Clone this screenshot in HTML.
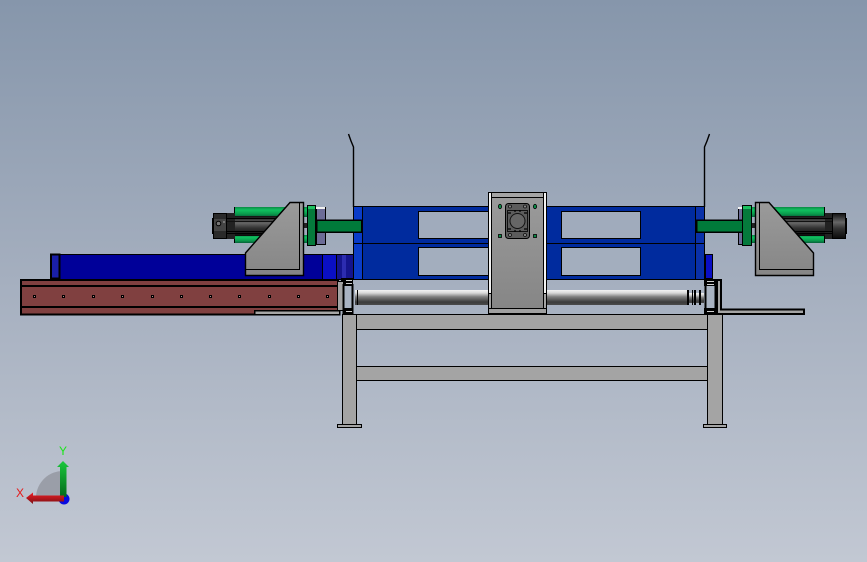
<!DOCTYPE html>
<html><head><meta charset="utf-8"><style>
html,body{margin:0;padding:0;width:867px;height:562px;overflow:hidden;background:#a5afbf}
svg{display:block}
</style></head><body>
<svg xmlns="http://www.w3.org/2000/svg" width="867" height="562" viewBox="0 0 867 562">
<defs>
<linearGradient id="bg" x1="0" y1="0" x2="0" y2="1"><stop offset="0" stop-color="#8696ab"/><stop offset=".5" stop-color="#a5afbf"/><stop offset="1" stop-color="#c2c8d3"/></linearGradient>
<linearGradient id="rod" x1="0" y1="0" x2="0" y2="1"><stop offset="0" stop-color="#f4f4f4"/><stop offset=".2" stop-color="#d8d8d8"/><stop offset=".45" stop-color="#808080"/><stop offset=".8" stop-color="#3c3c3c"/><stop offset="1" stop-color="#4a4a4a"/></linearGradient>
<linearGradient id="grn" x1="0" y1="0" x2="0" y2="1"><stop offset="0" stop-color="#0a8a45"/><stop offset=".3" stop-color="#10c060"/><stop offset=".7" stop-color="#0a9a4c"/><stop offset="1" stop-color="#06603a"/></linearGradient>
<linearGradient id="blk" x1="0" y1="0" x2="0" y2="1"><stop offset="0" stop-color="#111"/><stop offset=".35" stop-color="#666"/><stop offset=".6" stop-color="#333"/><stop offset="1" stop-color="#0a0a0a"/></linearGradient>
<linearGradient id="gus" x1="0" y1="0" x2="0" y2="1"><stop offset="0" stop-color="#9a9a9a"/><stop offset="1" stop-color="#868686"/></linearGradient>
<linearGradient id="ga" x1="0" y1="0" x2="0" y2="1"><stop offset="0" stop-color="#1cc83c"/><stop offset="1" stop-color="#036a1c"/></linearGradient>
<linearGradient id="ra" x1="0" y1="0" x2="0" y2="1"><stop offset="0" stop-color="#ee1c24"/><stop offset="1" stop-color="#7a1014"/></linearGradient>
</defs>
<rect width="867" height="562" fill="url(#bg)"/>

<!-- upper thin lines -->
<g fill="none" stroke="#000" stroke-width="1.4">
<path d="M348.500 134L351 141L353.500 147V207"/>
<path d="M709.500 134L707 141L704.500 147V207"/>
</g>

<g stroke="#000" stroke-width="1" shape-rendering="crispEdges">
<!-- dark blue bar left -->
<rect x="51" y="254.500" width="295" height="25" fill="#000099"/>
<rect x="51" y="254.500" width="8.500" height="24" fill="#1a1fa8" stroke-width="2"/>
<rect x="322.500" y="254.500" width="14" height="25" fill="#0a0fc4"/>
<rect x="336.500" y="254.500" width="17" height="25" fill="#14148c"/>
<rect x="342" y="255" width="4" height="24" fill="#2c2cb0" stroke="none"/>

<!-- main blue box -->
<rect x="353.500" y="206.500" width="351" height="73" fill="#002b9e"/>
<rect x="354" y="207" width="8" height="72" fill="#0a3cc8" stroke="none"/>
<rect x="696" y="207" width="8" height="72" fill="#0a31a8" stroke="none"/>
<path d="M362.500 207V279M695.500 207V279M354 243.500H704" fill="none"/>
<rect x="418.500" y="211.500" width="80" height="27" fill="#a0abbc"/>
<rect x="418.500" y="247.500" width="80" height="28" fill="#a3aebe"/>
<rect x="561.500" y="211.500" width="79" height="27" fill="#a0abbc"/>
<rect x="561.500" y="247.500" width="79" height="28" fill="#a3aebe"/>

<!-- small blue right -->
<rect x="705.500" y="254.500" width="7" height="24" fill="#0a0fc4"/>

<!-- red beam -->
<rect x="21" y="280" width="317" height="34.500" fill="#804040" stroke-width="2"/>
<path d="M21 286H338M21 307H338" fill="none" stroke-width="2"/>
<rect x="254.500" y="310.500" width="85" height="4" fill="#a6a6a6" stroke-width="1.500"/>
</g>

<!-- beam holes -->
<g fill="#b09090" stroke="#000" stroke-width="1" shape-rendering="crispEdges">
<rect x="33.500" y="295.500" width="2" height="2"/><rect x="62.500" y="295.500" width="2" height="2"/><rect x="92.500" y="295.500" width="2" height="2"/><rect x="121.500" y="295.500" width="2" height="2"/><rect x="151.500" y="295.500" width="2" height="2"/><rect x="180.500" y="295.500" width="2" height="2"/><rect x="209.500" y="295.500" width="2" height="2"/><rect x="238.500" y="295.500" width="2" height="2"/><rect x="268.500" y="295.500" width="2" height="2"/><rect x="297.500" y="295.500" width="2" height="2"/><rect x="326.500" y="295.500" width="2" height="2"/>
</g>

<g stroke="#000" stroke-width="1" shape-rendering="crispEdges">
<!-- table -->
<rect x="356.500" y="314.500" width="351" height="15" fill="#a4a4a4"/>
<rect x="356.500" y="366.500" width="351" height="14" fill="#a4a4a4"/>
<rect x="342.500" y="314.500" width="14" height="110" fill="#a4a4a4"/>
<rect x="707.500" y="314.500" width="15" height="110" fill="#a4a4a4"/>
<rect x="337.500" y="424.500" width="24" height="3" fill="#a4a4a4"/>
<rect x="703.500" y="424.500" width="23" height="3" fill="#a4a4a4"/>
<!-- right bracket -->
<path d="M717 280H721V309.500H804V314H717Z" fill="#a4a4a4" stroke-width="2"/>
<!-- left gray post -->
<rect x="337.500" y="281.500" width="6" height="29" fill="#a4a4a4"/>
</g>

<!-- end frames -->
<g fill="#a9b3c2" stroke="#000" stroke-width="2" shape-rendering="crispEdges">
<rect x="343.500" y="285" width="9" height="29"/>
<rect x="705.500" y="285" width="10" height="29"/>
</g>
<g fill="#000" shape-rendering="crispEdges">
<rect x="341" y="278" width="12" height="3"/><rect x="343" y="281" width="10" height="5"/>
<rect x="344" y="308" width="9" height="6"/>
<rect x="704" y="279" width="16" height="2"/><rect x="704" y="281" width="13" height="5"/>
<rect x="704" y="308" width="12" height="6"/>
</g>
<g fill="#d0d0d0" shape-rendering="crispEdges">
<rect x="346" y="280" width="6" height="1"/><rect x="346" y="283" width="6" height="1"/><rect x="346" y="311" width="6" height="1"/>
<rect x="707" y="281" width="7" height="1"/><rect x="707" y="284" width="7" height="1"/><rect x="707" y="311" width="7" height="1"/>
</g>

<!-- roller -->
<rect x="355" y="290" width="334" height="15" fill="url(#rod)" shape-rendering="crispEdges"/>
<rect x="689" y="293" width="15" height="10" fill="url(#rod)" shape-rendering="crispEdges"/>
<g fill="#000" shape-rendering="crispEdges">
<rect x="357" y="290" width="1" height="15"/>
<rect x="687" y="290" width="2" height="15"/><rect x="692" y="290" width="1" height="15"/><rect x="694" y="290" width="2" height="15"/><rect x="699" y="290" width="2" height="15"/>
</g>

<!-- center plate -->
<g stroke="#000" stroke-width="1" shape-rendering="crispEdges">
<rect x="488.500" y="192.500" width="58" height="121" fill="#a4a4a4"/>
<rect x="488.500" y="192.500" width="3" height="101" fill="#f2f2f2"/>
<rect x="543.500" y="192.500" width="3" height="101" fill="#f2f2f2"/>
<rect x="491.500" y="197.500" width="52" height="111" fill="url(#gus)"/>
<rect x="488.500" y="308.500" width="58" height="5" fill="#a0a0a0"/>
</g>
<g>
<rect x="505.500" y="203.500" width="24" height="35" rx="3" fill="#5c5c5c" stroke="#000"/>
<rect x="507.500" y="210.500" width="20" height="21" fill="none" stroke="#111"/>
<circle cx="517.500" cy="221" r="7.500" fill="#666" stroke="#111"/>
<circle cx="510" cy="206.500" r="1.500" fill="#888" stroke="#111" stroke-width=".8"/><circle cx="525" cy="206.500" r="1.500" fill="#888" stroke="#111" stroke-width=".8"/>
<circle cx="510" cy="235" r="1.500" fill="#888" stroke="#111" stroke-width=".8"/><circle cx="525" cy="235" r="1.500" fill="#888" stroke="#111" stroke-width=".8"/>
<path d="M508 213h3M524 213h3M508 229h3M524 229h3M515 210v2M520 210v2M515 230v2M520 230v2" stroke="#000" stroke-width="1.200"/>
<ellipse cx="500" cy="206.500" rx="1.600" ry="2.200" fill="#0a8a45" stroke="#000" stroke-width=".8"/>
<ellipse cx="535" cy="206.500" rx="1.600" ry="2.200" fill="#0a8a45" stroke="#000" stroke-width=".8"/>
<rect x="498.500" y="234.500" width="3" height="3" fill="#0a8a45" stroke="#000" stroke-width=".8"/>
<rect x="533.500" y="234.500" width="3" height="3" fill="#0a8a45" stroke="#000" stroke-width=".8"/>
</g>

<!-- LEFT cylinder -->
<g shape-rendering="crispEdges">
<rect x="234" y="207" width="74" height="10" fill="url(#grn)"/>
<rect x="234" y="235" width="74" height="8" fill="url(#grn)"/>
<rect x="234" y="207" width="1" height="36" fill="#000"/>
<rect x="226" y="216" width="60" height="20" fill="url(#blk)"/>
<rect x="226" y="213" width="9" height="26" fill="#222"/>
<rect x="226" y="218" width="60" height="1" fill="#000"/><rect x="226" y="221" width="60" height="1" fill="#111"/><rect x="226" y="231" width="60" height="1" fill="#000"/><rect x="226" y="233" width="60" height="1" fill="#000"/>
<rect x="213.500" y="213.500" width="13" height="25" fill="#2a2a2a" stroke="#000"/>
<rect x="212" y="218" width="2" height="16" fill="#000"/>
<rect x="214" y="219" width="12" height="12" fill="#444"/>
<rect x="223" y="221" width="2" height="2" fill="#777"/>
</g>
<circle cx="218.500" cy="223.500" r="2.300" fill="#777" stroke="#000"/>

<!-- RIGHT cylinder -->
<g shape-rendering="crispEdges">
<rect x="752" y="207" width="73" height="10" fill="url(#grn)"/>
<rect x="752" y="235" width="73" height="8" fill="url(#grn)"/>
<rect x="824" y="207" width="1" height="36" fill="#000"/>
<rect x="770" y="216" width="63" height="20" fill="url(#blk)"/>
<rect x="825" y="213" width="8" height="26" fill="#222"/>
<rect x="770" y="218" width="63" height="1" fill="#000"/><rect x="770" y="221" width="63" height="1" fill="#111"/><rect x="770" y="231" width="63" height="1" fill="#000"/><rect x="770" y="233" width="63" height="1" fill="#000"/>
<rect x="832.500" y="213.500" width="13" height="25" fill="url(#blk)" stroke="#000"/>
<rect x="845" y="218" width="2" height="16" fill="#000"/>
</g>

<!-- plates & shafts -->
<g stroke="#000" stroke-width="1" shape-rendering="crispEdges">
<rect x="316.500" y="207.500" width="9" height="37" fill="#6c6c96"/>
<rect x="316" y="207" width="9" height="2" fill="#f0f0f0" stroke="none"/>
<rect x="738.500" y="207.500" width="4" height="37" fill="#6c6c96"/>
<rect x="738" y="207" width="4" height="2" fill="#f0f0f0" stroke="none"/>
<rect x="316.500" y="220" width="45" height="12" fill="#007a3a" stroke-width="1.500"/>
<rect x="696.500" y="220" width="46" height="12" fill="#007a3a" stroke-width="1.500"/>
<rect x="307.500" y="205.500" width="8" height="40" fill="#057a3c"/>
<rect x="308" y="206" width="7" height="3" fill="#1cc060" stroke="none"/>
<rect x="742.500" y="205.500" width="9" height="40" fill="#057a3c"/>
<rect x="743" y="206" width="8" height="3" fill="#1cc060" stroke="none"/>
</g>
<rect x="304" y="223" width="3" height="5" fill="#222" shape-rendering="crispEdges"/>
<rect x="752" y="223" width="3" height="5" fill="#222" shape-rendering="crispEdges"/>

<!-- gussets -->
<path d="M245.500 253L290 202.500H303.500V275.500H245.500Z" fill="url(#gus)" stroke="#000" stroke-width="1.400"/>
<path d="M246 269.500H299.500V203" fill="none" stroke="#000"/>
<path d="M813.500 253L769 202.500H755.500V275.500H813.500Z" fill="url(#gus)" stroke="#000" stroke-width="1.400"/>
<path d="M813 269.500H759.500V203" fill="none" stroke="#000"/>

<!-- triad -->
<path d="M64 497V471A27 27 0 0 0 36 497Z" fill="#9a9ea8"/>
<circle cx="64" cy="499" r="5.500" fill="#0a0ae0"/>
<path d="M60 497V467H57L63 461L69 467H66.500V497Z" fill="url(#ga)"/>
<path d="M64 495.500H33V492.500L26 498L33 504V501.500H64Z" fill="url(#ra)"/>
<text x="63" y="455" font-family="'Liberation Sans',sans-serif" font-size="12" fill="#19e619" text-anchor="middle">Y</text>
<text x="20" y="497" font-family="'Liberation Sans',sans-serif" font-size="12" fill="#e61919" text-anchor="middle">X</text>
</svg>
</body></html>
